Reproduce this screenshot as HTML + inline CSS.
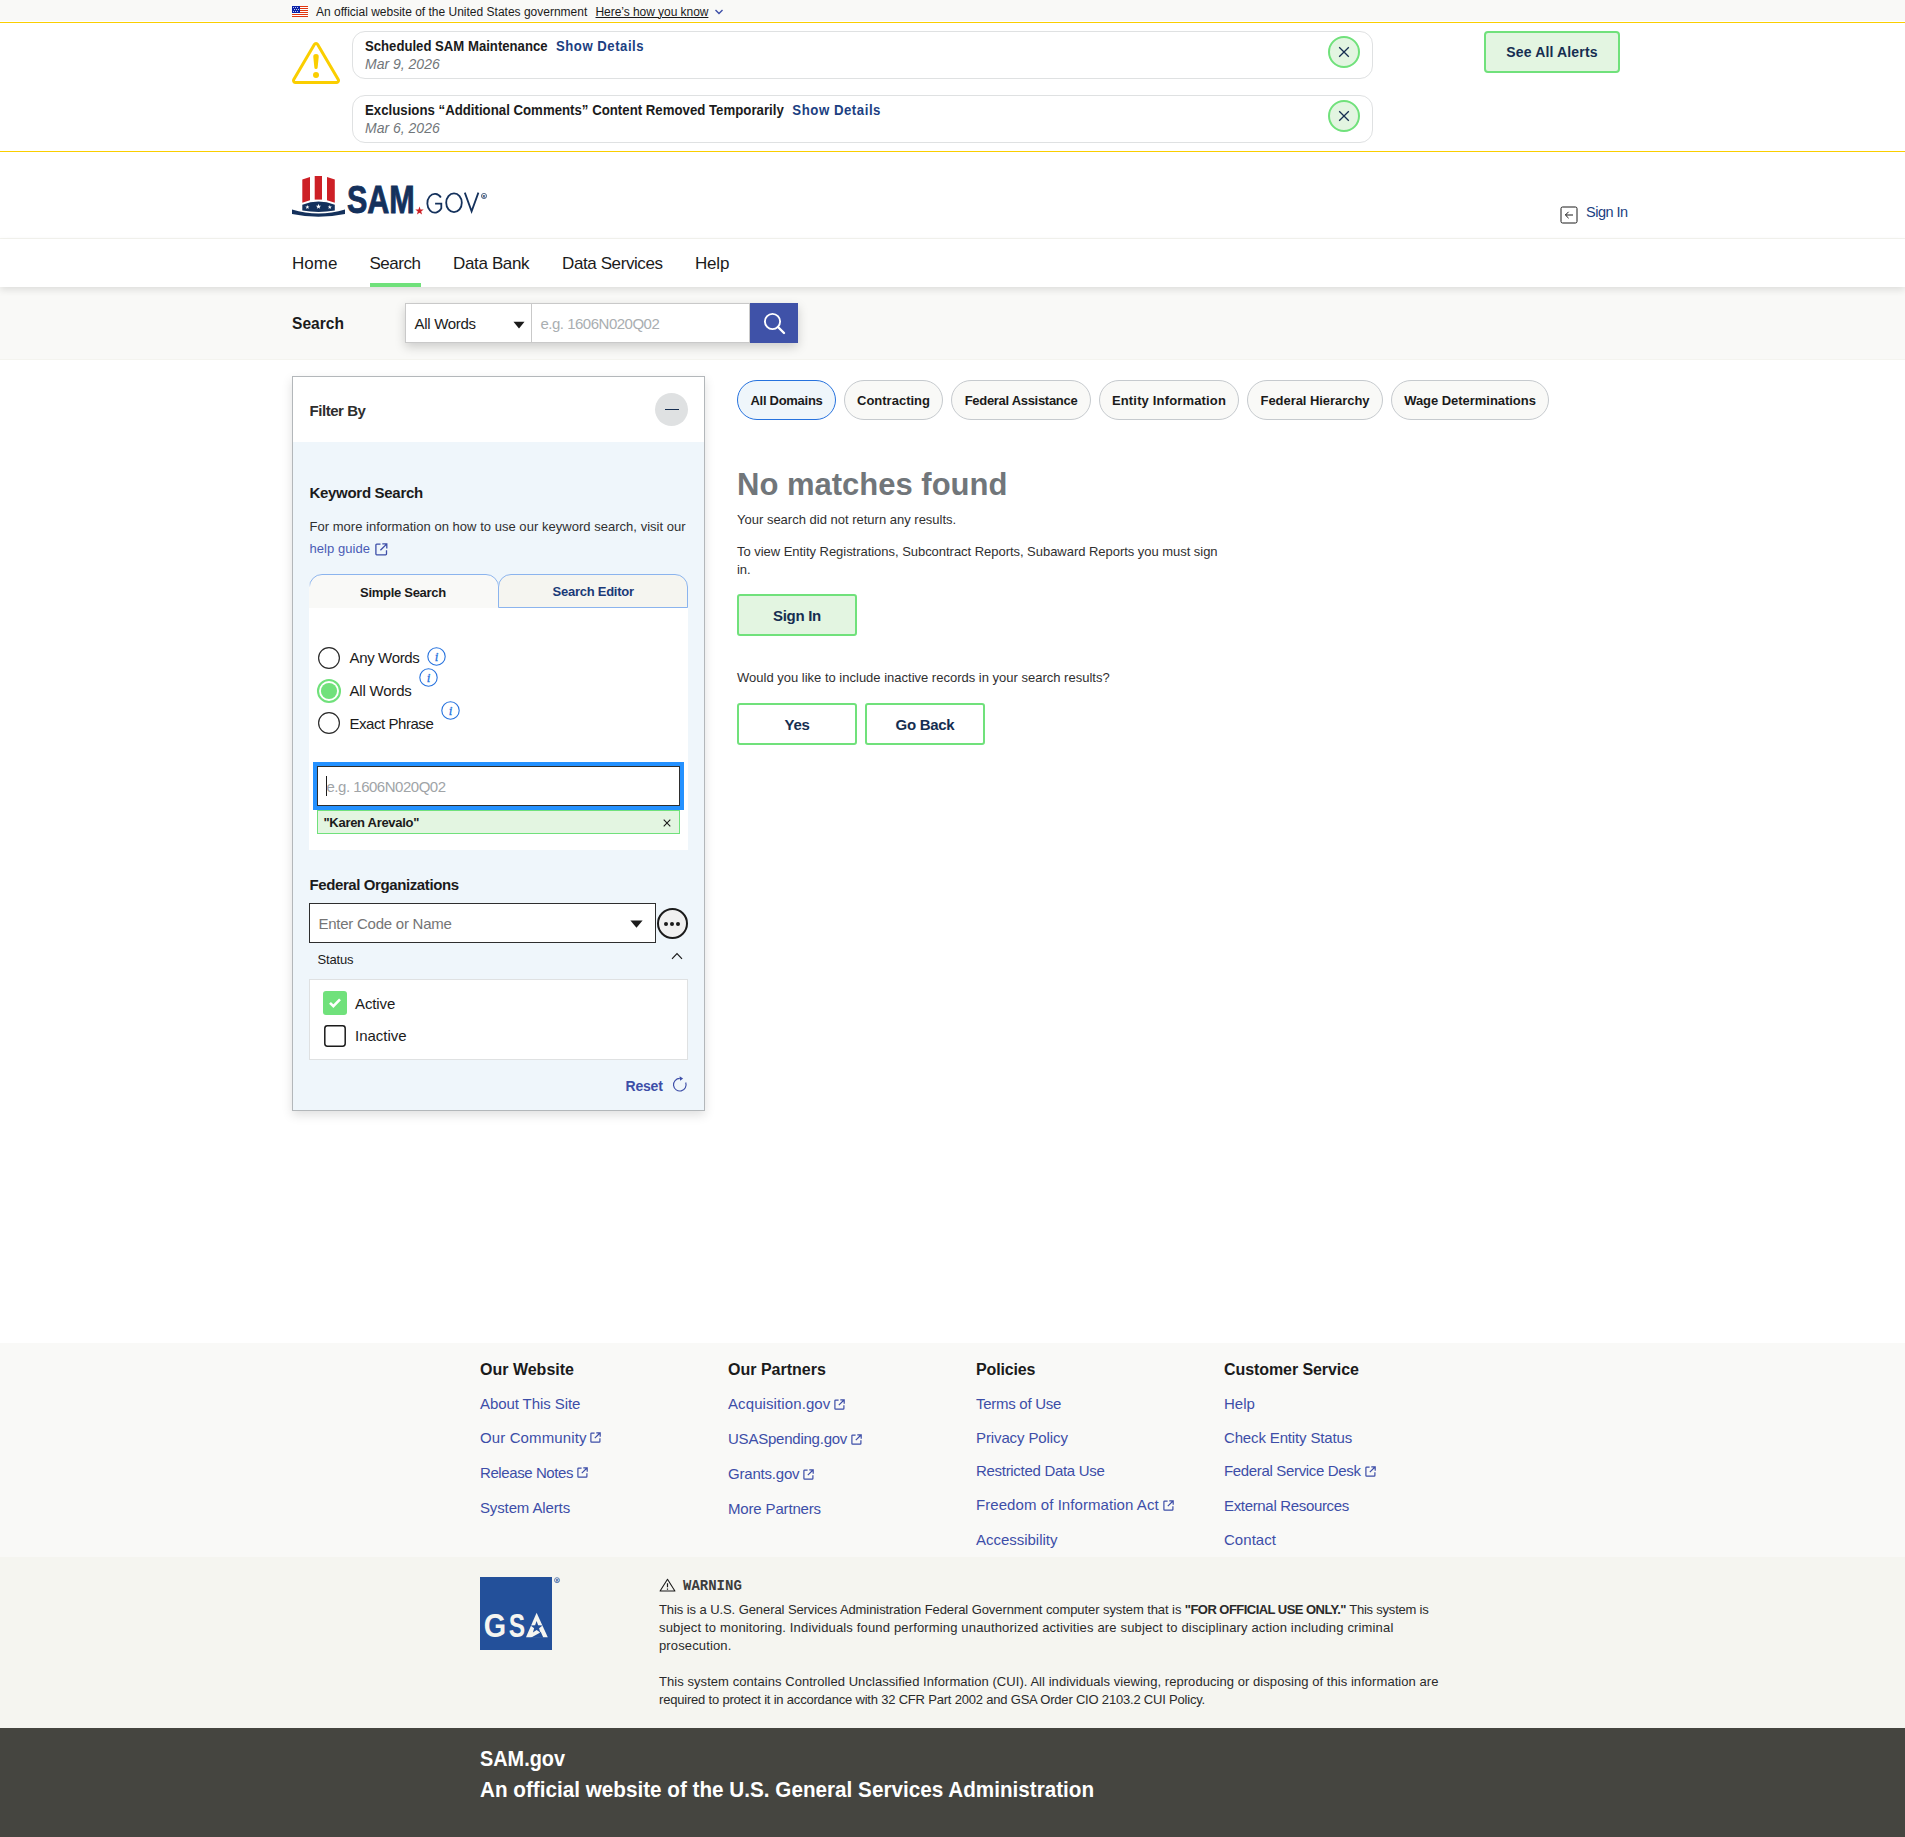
<!DOCTYPE html>
<html lang="en">
<head>
<meta charset="utf-8">
<title>SAM.gov | Search</title>
<style>
*{box-sizing:border-box;margin:0;padding:0}
html,body{width:1905px;height:1837px;overflow:hidden;background:#fff}
body{font-family:"Liberation Sans",sans-serif;color:#1b1b1b;position:relative;-webkit-font-smoothing:antialiased}
a{text-decoration:none;color:inherit}
.abs{position:absolute}
.t{position:absolute;white-space:nowrap;line-height:1;display:block}
.b{font-weight:700}
.sx{transform-origin:0 50%}
.i{font-style:italic}
.link{color:#3d4ea8}
.navy{color:#162e51}
svg{display:block}

/* ---------- gov banner ---------- */
#govbanner{position:absolute;left:0;top:0;width:1905px;height:21px;background:#f9f9f7}
#govbanner .txt{left:316px;top:5.5px;font-size:12px;color:#1b1b1b}
#govbanner .how{left:595.5px;top:5.5px;font-size:12px;color:#1b1b1b;text-decoration:underline;letter-spacing:-0.05px}

/* ---------- alerts ---------- */
#alerts{position:absolute;left:0;top:22px;width:1905px;height:130px;background:#fff;border-top:1px solid #face00;border-bottom:1px solid #face00}
.acard{position:absolute;left:352px;width:1021px;height:48px;border:1px solid #dfe1e2;border-radius:13px;background:#fff}
.acard .ttl{left:11.8px;top:5.5px;font-size:15px;font-weight:700;transform-origin:0 50%;transform:scaleX(0.876)}
.acard .ttl a{color:#1c3f82;margin-left:5.5px;letter-spacing:0.6px}
.acard .dt{left:12px;top:24.5px;font-size:14px;font-style:italic;color:#71767a}
.xbtn{position:absolute;width:32px;height:32px;border-radius:50%;border:2px solid #70e17b;background:#e3f5e1}
#seeall{position:absolute;left:1484px;top:8px;width:136px;height:42px;border:2px solid #70e17b;border-radius:4px;background:#e3f5e1;color:#162e51;font-weight:700;font-size:14px;text-align:center;line-height:38px;letter-spacing:0.15px}

/* ---------- header ---------- */
#header{position:absolute;left:0;top:152px;width:1905px;height:87px;background:#fff;border-bottom:1px solid #f4f4ef}
#signin{left:1586px;top:52.5px;font-size:14.5px;color:#1c3f82;letter-spacing:-0.5px}

/* ---------- nav ---------- */
#nav{position:absolute;left:0;top:239px;width:1905px;height:48px;background:#fff;box-shadow:0 3px 7px rgba(0,0,0,.11);z-index:2}
#nav .t{top:15.5px;font-size:17px;color:#1b1b1b}
#nav .bar{position:absolute;left:370px;top:44px;width:51px;height:4px;background:#70e17b}

/* ---------- search strip ---------- */
#sstrip{position:absolute;left:0;top:287px;width:1905px;height:73px;background:#f9f9f7;border-bottom:1px solid #f4f4ef}
#sstrip .lbl{left:292px;top:27.5px;font-size:17px;font-weight:700;transform-origin:0 50%;transform:scaleX(0.915)}
#sbox{position:absolute;left:405px;top:16px;width:393px;height:40px;box-shadow:0 4px 10px rgba(0,0,0,.18);background:#fff}
#sbox .sel{position:absolute;left:0;top:0;width:127px;height:40px;border:1px solid #c9c9c9;background:#fff}
#sbox .inp{position:absolute;left:127px;top:0;width:218px;height:40px;border:1px solid #c9c9c9;border-left:none;background:#fff}
#sbox .btn{position:absolute;left:345px;top:0;width:48px;height:40px;background:#3f52a8}
</style>
</head>
<body>

<!-- ===== GOV BANNER ===== -->
<div id="govbanner">
  <svg class="abs" style="left:292px;top:6px" width="16" height="11" viewBox="0 0 16 11">
    <rect width="16" height="11" fill="#fff"/>
    <g fill="#e0360f"><rect y="0" width="16" height="1"/><rect y="2" width="16" height="1"/><rect y="4" width="16" height="1"/><rect y="6" width="16" height="1"/><rect y="8" width="16" height="1"/><rect y="10" width="16" height="1"/></g>
    <rect width="8" height="7" fill="#0b22a8"/>
    <g fill="#fff"><circle cx="1.5" cy="1.5" r=".5"/><circle cx="3.5" cy="1.5" r=".5"/><circle cx="5.5" cy="1.5" r=".5"/><circle cx="2.5" cy="3.5" r=".5"/><circle cx="4.5" cy="3.5" r=".5"/><circle cx="6.5" cy="3.5" r=".5"/><circle cx="1.5" cy="5.5" r=".5"/><circle cx="3.5" cy="5.5" r=".5"/><circle cx="5.5" cy="5.5" r=".5"/></g>
  </svg>
  <span class="t txt">An official website of the United States government</span>
  <span class="t how">Here’s how you know</span>
  <svg class="abs" style="left:714px;top:8px" width="10" height="8" viewBox="0 0 10 8"><path d="M1.5 2 L5 5.5 L8.5 2" fill="none" stroke="#3d4ea8" stroke-width="1.4"/></svg>
</div>

<!-- ===== ALERTS ===== -->
<div id="alerts">
  <svg class="abs" style="left:292px;top:16px" width="48" height="48" viewBox="0 0 16 16" fill="#face00">
    <path d="M7.938 2.016A.13.13 0 0 1 8.002 2a.13.13 0 0 1 .063.016.146.146 0 0 1 .054.057l6.857 11.667c.036.06.035.124.002.183a.163.163 0 0 1-.054.06.116.116 0 0 1-.066.017H1.146a.115.115 0 0 1-.066-.017.163.163 0 0 1-.054-.06.176.176 0 0 1 .002-.183L7.884 2.073a.147.147 0 0 1 .054-.057zm1.044-.45a1.13 1.13 0 0 0-1.96 0L.165 13.233c-.457.778.091 1.767.98 1.767h13.713c.889 0 1.438-.99.98-1.767L8.982 1.566z"/>
    <path d="M7.002 12a1 1 0 1 1 2 0 1 1 0 0 1-2 0zM7.1 5.995a.905.905 0 1 1 1.8 0l-.35 3.507a.552.552 0 0 1-1.1 0L7.1 5.995z"/>
  </svg>

  <div class="acard" style="top:8px">
    <span class="t ttl">Scheduled SAM Maintenance <a>Show Details</a></span>
    <span class="t dt">Mar 9, 2026</span>
  </div>
  <div class="xbtn" style="left:1328px;top:13px"><svg class="abs" style="left:8px;top:8px" width="12" height="12" viewBox="0 0 12 12"><path d="M1.2 1.2 L10.8 10.8 M10.8 1.2 L1.2 10.8" stroke="#162e51" stroke-width="1.3" fill="none"/></svg></div>

  <div class="acard" style="top:72px">
    <span class="t ttl" style="transform:scaleX(0.882)">Exclusions “Additional Comments” Content Removed Temporarily <a>Show Details</a></span>
    <span class="t dt">Mar 6, 2026</span>
  </div>
  <div class="xbtn" style="left:1328px;top:77px"><svg class="abs" style="left:8px;top:8px" width="12" height="12" viewBox="0 0 12 12"><path d="M1.2 1.2 L10.8 10.8 M10.8 1.2 L1.2 10.8" stroke="#162e51" stroke-width="1.3" fill="none"/></svg></div>

  <div id="seeall">See All Alerts</div>
</div>

<!-- ===== HEADER ===== -->
<div id="header">
  <!-- logo placeholder -->
  <svg id="logo" class="abs" style="left:290px;top:20px" width="202" height="48" viewBox="290 172 202 48">
    <g fill="#cd2026">
      <path d="M302.3 179.4 L310 176.9 L310 200.3 L302.3 202.8 Z"/>
      <path d="M314.7 176 L322 176 L322 199.6 L314.7 199.6 Z"/>
      <path d="M327 176.9 L334.8 179.4 L334.8 202.8 L327 200.3 Z"/>
    </g>
    <path d="M302.3 204.8 Q318.5 198.2 334.8 204.8 L334.8 210.6 Q318.5 213.2 302.3 210.6 Z" fill="#14315c"/>
    <path d="M292 209.6 Q318.5 217.4 345 209.6 L345 213.9 Q318.5 219.4 292 213.9 Z" fill="#14315c"/>
    <g fill="#fff">
      <polygon points="307.40,205.00 307.92,206.49 309.49,206.52 308.24,207.47 308.69,208.98 307.40,208.08 306.11,208.98 306.56,207.47 305.31,206.52 306.88,206.49"/>
      <polygon points="318.50,203.80 319.16,205.69 321.16,205.73 319.57,206.95 320.15,208.87 318.50,207.72 316.85,208.87 317.43,206.95 315.84,205.73 317.84,205.69"/>
      <polygon points="329.80,205.00 330.32,206.49 331.89,206.52 330.64,207.47 331.09,208.98 329.80,208.08 328.51,208.98 328.96,207.47 327.71,206.52 329.28,206.49"/>
    </g>
    <text x="346.9" y="212.5" font-family="Liberation Sans, sans-serif" font-weight="700" font-size="38.4" fill="#14315c" stroke="#14315c" stroke-width="0.9" textLength="67.8" lengthAdjust="spacingAndGlyphs">SAM</text>
    <polygon points="419.50,206.50 420.53,209.48 423.68,209.54 421.17,211.44 422.09,214.46 419.50,212.66 416.91,214.46 417.83,211.44 415.32,209.54 418.47,209.48" fill="#cd2026"/>
    <g fill="none" stroke="#14315c" stroke-width="1.8">
      <path d="M440.9 197.4 A7.6 9.4 0 1 0 441.3 208.4 L441.3 203.6 L435.1 203.6"/>
      <ellipse cx="454" cy="202.7" rx="7.8" ry="9.4"/>
      <path d="M464.8 192.6 L471.6 211.4 L478.4 192.6"/>
    </g>
    <circle cx="484" cy="196" r="2.6" fill="none" stroke="#14315c" stroke-width="0.7"/>
    <text x="482.6" y="197.5" font-family="Liberation Sans, sans-serif" font-weight="700" font-size="4" fill="#14315c">R</text>
  </svg>
  <svg class="abs" style="left:1559.5px;top:53.5px" width="18" height="18" viewBox="0 0 18 18"><rect x="1" y="1" width="16" height="16" rx="1.6" fill="none" stroke="#1b1b1b" stroke-width="1"/><path d="M13 9 H5.4 M8.6 5.8 L5.4 9 L8.6 12.2" fill="none" stroke="#1b1b1b" stroke-width="1"/></svg>
  <span class="t" id="signin">Sign In</span>
</div>

<!-- ===== NAV ===== -->
<div id="nav">
  <span class="t" style="left:292px">Home</span>
  <span class="t" style="left:369.5px;letter-spacing:-0.5px">Search</span>
  <span class="t" style="left:453px;letter-spacing:-0.35px">Data Bank</span>
  <span class="t" style="left:562px;letter-spacing:-0.4px">Data Services</span>
  <span class="t" style="left:695px;letter-spacing:-0.2px">Help</span>
  <div class="bar"></div>
</div>

<!-- ===== SEARCH STRIP ===== -->
<div id="sstrip">
  <span class="t lbl">Search</span>
  <div id="sbox">
    <div class="sel"><span class="t" style="left:8.5px;top:12px;font-size:15px;letter-spacing:-0.3px">All Words</span>
      <svg class="abs" style="left:107px;top:16.5px" width="12" height="8" viewBox="0 0 12 8"><path d="M0.5 0.8 H11.5 L6 7.6 Z" fill="#1b1b1b"/></svg></div>
    <div class="inp"><span class="t" style="left:8.5px;top:12px;font-size:15px;color:#a9aeb1;letter-spacing:-0.5px">e.g. 1606N020Q02</span></div>
    <div class="btn"><svg class="abs" style="left:12px;top:8px" width="24" height="24" viewBox="0 0 24 24"><circle cx="10.5" cy="10.5" r="7.6" fill="none" stroke="#fff" stroke-width="1.9"/><path d="M16 16 L22 22" stroke="#fff" stroke-width="2.4" stroke-linecap="round"/></svg></div>
  </div>
</div>


<!-- ===== MAIN ===== -->
<style>
#filter{position:absolute;left:292px;top:376px;width:413px;height:735px;border:1px solid #b3b7ba;background:#eff6fb;box-shadow:0 4px 10px rgba(0,0,0,.13)}
#filter .hd{position:absolute;left:0;top:0;width:411px;height:65px;background:#fff}
#filter .t{color:#1b1b1b}
.info{position:absolute;width:19px;height:19px}
.radio{position:absolute;width:22px;height:22px;border-radius:50%;border:2px solid #1b1b1b;background:#fff}
.radio.on{width:26px;height:26px;border:2px solid #70e17b;background:#fff}
.radio.on:after{content:"";position:absolute;left:2px;top:2px;width:18px;height:18px;border-radius:50%;background:#70e17b}
.pill{position:absolute;top:380px;height:40px;border:1px solid #c6cace;border-radius:20px;background:#f9f9f7;font-weight:700;font-size:13px;line-height:40px;text-align:center;color:#1b1b1b;letter-spacing:-0.28px;white-space:nowrap}
.pill.on{border-color:#2672de;background:#eff6fb;color:#1b1b1b}
.gbtn{position:absolute;height:42px;border:2px solid #70e17b;border-radius:3px;background:#fff;color:#162e51;font-weight:700;font-size:15px;line-height:40px;text-align:center;letter-spacing:-0.3px}
#main .p{position:absolute;left:737px;font-size:13px;line-height:18px;color:#303030;white-space:nowrap}
</style>
<div id="main">
  <div id="filter">
    <div class="hd">
      <span class="t b" style="left:16.5px;top:26px;font-size:15px;letter-spacing:-0.45px;color:#2e2e2e">Filter By</span>
      <div class="abs" style="left:362px;top:16px;width:33px;height:33px;border-radius:50%;background:#dfe1e2"></div>
      <div class="abs" style="left:372px;top:32px;width:14px;height:1.3px;background:#162e51"></div>
    </div>
    <span class="t b" style="left:16.5px;top:108px;font-size:15px;letter-spacing:-0.3px">Keyword Search</span>
    <span class="t" style="left:16.5px;top:143px;font-size:13px;letter-spacing:0.03px;color:#303030">For more information on how to use our keyword search, visit our</span>
    <span class="t" style="left:16.5px;top:165px;font-size:13px;color:#4a5bb5;letter-spacing:0.05px">help guide</span>
    <svg class="abs" style="left:82px;top:166px" width="13" height="13" viewBox="0 0 13 13" fill="none" stroke="#3d4ea8" stroke-width="1.3"><path d="M5.5 1.2 H1.7 Q0.9 1.2 0.9 2 V11 Q0.9 11.8 1.7 11.8 H10.7 Q11.5 11.8 11.5 11 V7.3"/><path d="M7.3 0.9 H11.8 V5.4 M11.6 1.1 L5.4 7.3"/></svg>

    <!-- tabs -->
    <svg class="abs" style="left:16px;top:197px" width="190" height="34" viewBox="0 0 190 34"><defs><linearGradient id="tg" x1="0" y1="0" x2="0" y2="1"><stop offset="0" stop-color="#8bb4ee"/><stop offset="0.35" stop-color="#8bb4ee"/><stop offset="0.6" stop-color="#8bb4ee" stop-opacity="0"/></linearGradient></defs><path d="M0 34 V13 A13 13 0 0 1 13 0 H177 A13 13 0 0 1 190 13 V34 Z" fill="#f9f9f7"/><path d="M0.5 22 V13 A12.5 12.5 0 0 1 13 0.5 H177 A12.5 12.5 0 0 1 189.5 13" fill="none" stroke="url(#tg)" stroke-width="1"/></svg>
    <div class="abs" style="left:205px;top:197px;width:190px;height:34px;border:1px solid #8bb4ee;border-radius:13px 13px 0 0;background:#f5f5f0"></div>
    <span class="t b" style="left:67px;top:209px;font-size:13px;letter-spacing:-0.28px">Simple Search</span>
    <span class="t b" style="left:259.5px;top:208px;font-size:13px;letter-spacing:-0.25px;color:#1a3a78">Search Editor</span>

    <!-- white panel -->
    <div class="abs" style="left:16px;top:231px;width:379px;height:242px;background:#fff"></div>
    <svg class="abs" style="left:24px;top:269px" width="24" height="24" viewBox="0 0 24 24"><circle cx="12" cy="12" r="10.4" fill="#fff" stroke="#2b2b2b" stroke-width="1.2"/></svg>
    <span class="t" style="left:56.5px;top:272.5px;font-size:15px;letter-spacing:-0.35px">Any Words</span>
    <svg class="info" style="left:133.5px;top:269.5px" viewBox="0 0 19 19"><circle cx="9.5" cy="9.5" r="8.7" fill="none" stroke="#2672de" stroke-width="1.1"/><text x="9.6" y="13.6" text-anchor="middle" font-family="Liberation Serif, serif" font-style="italic" font-weight="400" font-size="13" fill="#2672de" stroke="#2672de" stroke-width="0.3">i</text></svg>

    <svg class="abs" style="left:23px;top:301px" width="26" height="26" viewBox="0 0 26 26"><circle cx="13" cy="13" r="11" fill="#fff" stroke="#70e17b" stroke-width="2.1"/><circle cx="13" cy="13" r="8.1" fill="#70e17b"/></svg>
    <span class="t" style="left:56.5px;top:305.5px;font-size:15px;letter-spacing:-0.2px">All Words</span>
    <svg class="info" style="left:126px;top:290.5px" viewBox="0 0 19 19"><circle cx="9.5" cy="9.5" r="8.7" fill="none" stroke="#2672de" stroke-width="1.1"/><text x="9.6" y="13.6" text-anchor="middle" font-family="Liberation Serif, serif" font-style="italic" font-weight="400" font-size="13" fill="#2672de" stroke="#2672de" stroke-width="0.3">i</text></svg>

    <svg class="abs" style="left:24px;top:333.5px" width="24" height="24" viewBox="0 0 24 24"><circle cx="12" cy="12" r="10.4" fill="#fff" stroke="#2b2b2b" stroke-width="1.2"/></svg>
    <span class="t" style="left:56.5px;top:338.5px;font-size:15px;letter-spacing:-0.45px">Exact Phrase</span>
    <svg class="info" style="left:147.5px;top:323.5px" viewBox="0 0 19 19"><circle cx="9.5" cy="9.5" r="8.7" fill="none" stroke="#2672de" stroke-width="1.1"/><text x="9.6" y="13.6" text-anchor="middle" font-family="Liberation Serif, serif" font-style="italic" font-weight="400" font-size="13" fill="#2672de" stroke="#2672de" stroke-width="0.3">i</text></svg>

    <!-- focused input -->
    <div class="abs" style="left:20px;top:385px;width:371px;height:48px;background:#2491ff"></div>
    <div class="abs" style="left:24px;top:389px;width:363px;height:40px;background:#fff;border:1px solid #2e2e2e"></div>
    <div class="abs" style="left:33px;top:399px;width:1px;height:20px;background:#1b1b1b"></div>
    <span class="t" style="left:33.5px;top:401.5px;font-size:15px;color:#a0a4a7;letter-spacing:-0.48px">e.g. 1606N020Q02</span>
    <!-- chip -->
    <div class="abs" style="left:24px;top:433px;width:363px;height:24px;background:#e3f5e1;border:1px solid #70e17b"></div>
    <span class="t b" style="left:30.5px;top:438.5px;font-size:13px;letter-spacing:-0.3px">"Karen Arevalo"</span>
    <svg class="abs" style="left:370px;top:441.5px" width="8" height="8" viewBox="0 0 8 8"><path d="M0.7 0.7 L7.3 7.3 M7.3 0.7 L0.7 7.3" stroke="#1b1b1b" stroke-width="1.1"/></svg>

    <!-- federal orgs -->
    <span class="t b" style="left:16.5px;top:500px;font-size:15px;letter-spacing:-0.4px">Federal Organizations</span>
    <div class="abs" style="left:16px;top:526px;width:347px;height:40px;background:#fff;border:1px solid #2e2e2e"></div>
    <span class="t" style="left:25.5px;top:539px;font-size:15px;color:#757575;letter-spacing:-0.25px">Enter Code or Name</span>
    <svg class="abs" style="left:336.5px;top:542.5px" width="13" height="8" viewBox="0 0 13 8"><path d="M0.4 0.4 H12.6 L6.5 7.8 Z" fill="#1b1b1b"/></svg>
    <div class="abs" style="left:364px;top:531px;width:31px;height:31px;border-radius:50%;border:2px solid #1b1b1b;background:#f0f0f0"></div>
    <div class="abs" style="left:371.3px;top:544.6px;width:4px;height:4px;border-radius:50%;background:#1b1b1b;box-shadow:6px 0 0 #1b1b1b,12px 0 0 #1b1b1b"></div>

    <!-- status -->
    <span class="t" style="left:24.5px;top:576px;font-size:13px;letter-spacing:-0.15px">Status</span>
    <svg class="abs" style="left:378px;top:575px" width="12" height="8" viewBox="0 0 12 8"><path d="M1 6.8 L6 1.6 L11 6.8" fill="none" stroke="#1b1b1b" stroke-width="1.2"/></svg>
    <div class="abs" style="left:16px;top:602px;width:379px;height:81px;background:#fff;border:1px solid #dfe1e2"></div>
    <div class="abs" style="left:30px;top:614px;width:24px;height:24px;border-radius:3px;background:#70e17b"></div>
    <svg class="abs" style="left:35px;top:620px" width="14" height="12" viewBox="0 0 14 12"><path d="M2 5.8 L5.4 9.2 L12 2.4" fill="none" stroke="#fff" stroke-width="2.6"/></svg>
    <span class="t" style="left:62px;top:619px;font-size:15px;letter-spacing:-0.1px">Active</span>
    <svg class="abs" style="left:30px;top:647px" width="24" height="24" viewBox="0 0 24 24"><rect x="1.8" y="1.8" width="20.4" height="20.4" rx="2.6" fill="#fff" stroke="#1b1b1b" stroke-width="1.5"/></svg>
    <span class="t" style="left:62px;top:651px;font-size:15px">Inactive</span>

    <span class="t b" style="left:332.5px;top:702px;font-size:14px;color:#3d4ea8;letter-spacing:-0.2px">Reset</span>
    <svg class="abs" style="left:378px;top:699px" width="17" height="17" viewBox="0 0 17 17"><path d="M14.72 6.55 A6.3 6.3 0 1 1 8.8 2.4" fill="none" stroke="#3d4ea8" stroke-width="1.15"/><path d="M8.6 0.3 L12.1 2.5 L9.1 4.8 Z" fill="#3d4ea8" stroke="none"/></svg>
  </div>

  <!-- pills -->
  <div class="pill on" style="left:737px;width:99px">All Domains</div>
  <div class="pill" style="left:844px;width:99px;letter-spacing:0">Contracting</div>
  <div class="pill" style="left:951px;width:140px;letter-spacing:-0.3px">Federal Assistance</div>
  <div class="pill" style="left:1099px;width:140px;letter-spacing:0.16px">Entity Information</div>
  <div class="pill" style="left:1247px;width:136px;letter-spacing:-0.05px">Federal Hierarchy</div>
  <div class="pill" style="left:1391px;width:158px;letter-spacing:-0.04px">Wage Determinations</div>

  <span class="t b" style="left:737px;top:468.5px;font-size:31px;color:#71767a">No matches found</span>
  <div class="p" style="top:511px">Your search did not return any results.</div>
  <div class="p" style="top:543px;letter-spacing:-0.035px">To view Entity Registrations, Subcontract Reports, Subaward Reports you must sign<br>in.</div>
  <div class="gbtn" style="left:737px;top:594px;width:120px;background:#e3f5e1">Sign In</div>
  <div class="p" style="top:669px">Would you like to include inactive records in your search results?</div>
  <div class="gbtn" style="left:737px;top:703px;width:120px">Yes</div>
  <div class="gbtn" style="left:865px;top:703px;width:120px">Go Back</div>
</div>



<!-- ===== FOOTER ===== -->
<style>
#foot1{position:absolute;left:0;top:1343px;width:1905px;height:214px;background:#f9f9f7}
#foot2{position:absolute;left:0;top:1557px;width:1905px;height:171px;background:#f5f5f0}
#foot3{position:absolute;left:0;top:1728px;width:1905px;height:109px;background:#454540}
#foot1 .h{font-size:16px;font-weight:700;top:18.5px;color:#1b1b1b}
#foot1 .l{font-size:15px;color:#3d4ea8;letter-spacing:-0.1px}
#foot2 .p{position:absolute;left:659px;font-size:13px;line-height:18px;color:#2a2a2a;white-space:nowrap}
</style>
<div id="foot1">
  <span class="t h" style="left:480px">Our Website</span>
  <span class="t h" style="left:728px">Our Partners</span>
  <span class="t h" style="left:976px;letter-spacing:-0.15px">Policies</span>
  <span class="t h" style="left:1224px;letter-spacing:-0.08px">Customer Service</span>

  <span class="t l" style="left:480px;top:53px;letter-spacing:-0.08px">About This Site</span>
  <span class="t l" style="left:480px;top:87px;letter-spacing:0.12px">Our Community</span><svg class="abs" style="left:590px;top:89px" width="11" height="11" viewBox="0 0 11 11" fill="none" stroke="#3d4ea8" stroke-width="1.2"><path d="M4.6 1.1 H1.6 Q0.9 1.1 0.9 1.8 V9.4 Q0.9 10.1 1.6 10.1 H9.2 Q9.9 10.1 9.9 9.4 V6.3"/><path d="M6.3 0.8 H10.2 V4.7 M10 1 L4.8 6.2"/></svg>
  <span class="t l" style="left:480px;top:122px;letter-spacing:-0.41px">Release Notes</span><svg class="abs" style="left:577px;top:124px" width="11" height="11" viewBox="0 0 11 11" fill="none" stroke="#3d4ea8" stroke-width="1.2"><path d="M4.6 1.1 H1.6 Q0.9 1.1 0.9 1.8 V9.4 Q0.9 10.1 1.6 10.1 H9.2 Q9.9 10.1 9.9 9.4 V6.3"/><path d="M6.3 0.8 H10.2 V4.7 M10 1 L4.8 6.2"/></svg>
  <span class="t l" style="left:480px;top:157px;letter-spacing:-0.13px">System Alerts</span>

  <span class="t l" style="left:728px;top:53px;letter-spacing:0.1px">Acquisition.gov</span><svg class="abs" style="left:834px;top:56px" width="11" height="11" viewBox="0 0 11 11" fill="none" stroke="#3d4ea8" stroke-width="1.2"><path d="M4.6 1.1 H1.6 Q0.9 1.1 0.9 1.8 V9.4 Q0.9 10.1 1.6 10.1 H9.2 Q9.9 10.1 9.9 9.4 V6.3"/><path d="M6.3 0.8 H10.2 V4.7 M10 1 L4.8 6.2"/></svg>
  <span class="t l" style="left:728px;top:88px;letter-spacing:-0.23px">USASpending.gov</span><svg class="abs" style="left:851px;top:91px" width="11" height="11" viewBox="0 0 11 11" fill="none" stroke="#3d4ea8" stroke-width="1.2"><path d="M4.6 1.1 H1.6 Q0.9 1.1 0.9 1.8 V9.4 Q0.9 10.1 1.6 10.1 H9.2 Q9.9 10.1 9.9 9.4 V6.3"/><path d="M6.3 0.8 H10.2 V4.7 M10 1 L4.8 6.2"/></svg>
  <span class="t l" style="left:728px;top:123px;letter-spacing:-0.2px">Grants.gov</span><svg class="abs" style="left:803px;top:126px" width="11" height="11" viewBox="0 0 11 11" fill="none" stroke="#3d4ea8" stroke-width="1.2"><path d="M4.6 1.1 H1.6 Q0.9 1.1 0.9 1.8 V9.4 Q0.9 10.1 1.6 10.1 H9.2 Q9.9 10.1 9.9 9.4 V6.3"/><path d="M6.3 0.8 H10.2 V4.7 M10 1 L4.8 6.2"/></svg>
  <span class="t l" style="left:728px;top:158px;letter-spacing:-0.16px">More Partners</span>

  <span class="t l" style="left:976px;top:53px;letter-spacing:-0.28px">Terms of Use</span>
  <span class="t l" style="left:976px;top:87px;letter-spacing:-0.11px">Privacy Policy</span>
  <span class="t l" style="left:976px;top:120px;letter-spacing:-0.3px">Restricted Data Use</span>
  <span class="t l" style="left:976px;top:154px;letter-spacing:0.07px">Freedom of Information Act</span><svg class="abs" style="left:1163px;top:157px" width="11" height="11" viewBox="0 0 11 11" fill="none" stroke="#3d4ea8" stroke-width="1.2"><path d="M4.6 1.1 H1.6 Q0.9 1.1 0.9 1.8 V9.4 Q0.9 10.1 1.6 10.1 H9.2 Q9.9 10.1 9.9 9.4 V6.3"/><path d="M6.3 0.8 H10.2 V4.7 M10 1 L4.8 6.2"/></svg>
  <span class="t l" style="left:976px;top:189px;letter-spacing:-0.02px">Accessibility</span>

  <span class="t l" style="left:1224px;top:53px;letter-spacing:0.03px">Help</span>
  <span class="t l" style="left:1224px;top:87px;letter-spacing:-0.15px">Check Entity Status</span>
  <span class="t l" style="left:1224px;top:120px;letter-spacing:-0.34px">Federal Service Desk</span><svg class="abs" style="left:1365px;top:123px" width="11" height="11" viewBox="0 0 11 11" fill="none" stroke="#3d4ea8" stroke-width="1.2"><path d="M4.6 1.1 H1.6 Q0.9 1.1 0.9 1.8 V9.4 Q0.9 10.1 1.6 10.1 H9.2 Q9.9 10.1 9.9 9.4 V6.3"/><path d="M6.3 0.8 H10.2 V4.7 M10 1 L4.8 6.2"/></svg>
  <span class="t l" style="left:1224px;top:155px;letter-spacing:-0.33px">External Resources</span>
  <span class="t l" style="left:1224px;top:189px;letter-spacing:0.04px">Contact</span>
</div>

<div id="foot2">
  <svg class="abs" style="left:480px;top:20px" width="82" height="74" viewBox="480 1577 82 74">
    <rect x="480" y="1577" width="72" height="73" fill="#23509a"/>
    <text x="483.8" y="1637.2" font-family="Liberation Sans, sans-serif" font-weight="700" font-size="34" fill="#f5f5f0" textLength="22.4" lengthAdjust="spacingAndGlyphs">G</text><text x="508.7" y="1637.2" font-family="Liberation Sans, sans-serif" font-weight="700" font-size="34" fill="#f5f5f0" textLength="16.4" lengthAdjust="spacingAndGlyphs">S</text>
    <polygon points="536.6,1612.8 526,1637.2 547.8,1637.2" fill="#f5f5f0"/>
    <polygon points="536.60,1621.10 538.13,1625.30 542.59,1625.45 539.07,1628.20 540.30,1632.50 536.60,1630.00 532.90,1632.50 534.13,1628.20 530.61,1625.45 535.07,1625.30" fill="#23509a"/>
    <polygon points="530.8,1637.8 539.4,1632.9 540.6,1631.4 543.4,1637.8" fill="#23509a"/>
    <circle cx="557" cy="1580.2" r="2.5" fill="none" stroke="#23509a" stroke-width="0.7"/>
    <text x="555.7" y="1581.6" font-family="Liberation Sans, sans-serif" font-weight="700" font-size="3.8" fill="#23509a">R</text>
  </svg>
  <svg class="abs" style="left:659px;top:21px" width="17" height="14" viewBox="0 0 17 14"><path d="M8.5 1.3 L15.9 13 H1.1 Z" fill="none" stroke="#1b1b1b" stroke-width="1.1" stroke-linejoin="round"/><path d="M8.5 5.2 V9.2 M8.5 10.4 V11.8" stroke="#1b1b1b" stroke-width="1.2"/></svg>
  <span class="t b" style="left:683px;top:21.5px;font-family:'Liberation Mono',monospace;font-size:14px;color:#3d3d3d">WARNING</span>
  <div class="p" style="top:44px"><span style="letter-spacing:-0.082px">This is a U.S. General Services Administration Federal Government computer system that is </span><b style="letter-spacing:-0.54px">"FOR OFFICIAL USE ONLY."</b><span style="letter-spacing:-0.21px"> This system is</span><br><span style="letter-spacing:0.159px">subject to monitoring. Individuals found performing unauthorized activities are subject to disciplinary action including criminal</span><br><span style="letter-spacing:0.13px">prosecution.</span></div>
  <div class="p" style="top:116px"><span style="letter-spacing:0.057px">This system contains Controlled Unclassified Information (CUI). All individuals viewing, reproducing or disposing of this information are</span><br><span style="letter-spacing:-0.198px">required to protect it in accordance with 32 CFR Part 2002 and GSA Order CIO 2103.2 CUI Policy.</span></div>
</div>

<div id="foot3">
  <span class="t b sx" style="left:480px;top:20.5px;font-size:21.5px;color:#fff;transform:scaleX(0.924)">SAM.gov</span>
  <span class="t b sx" style="left:480px;top:51.5px;font-size:21.5px;color:#fff;transform:scaleX(0.962)">An official website of the U.S. General Services Administration</span>
</div>


</body>
</html>
